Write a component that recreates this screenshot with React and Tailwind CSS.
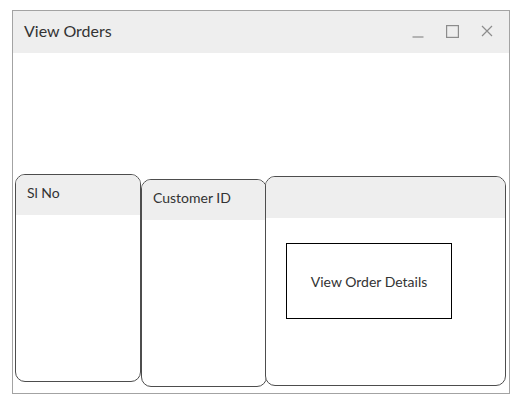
export default function App() {
  return (
    <div className="w-[516px] h-[402px] bg-white pt-[10px] pl-[12px]" style={{ fontFamily: 'Lato, "Noto Sans", sans-serif' }}>
      <div className="w-[498px] h-[384px] border border-[#a3a3a3] flex flex-col">
        <div className="h-[42px] bg-[#eeeeee] flex items-center justify-between pl-[11px] pr-[16px] pb-[2px]">
          <span className="text-[16px] text-[#333333]">View Orders</span>
          <div className="flex items-center gap-[22px] text-[#8c8c8c]">
            <svg width="12" height="14" viewBox="0 0 12 14">
              <path d="M0.5 13H11.5" stroke="currentColor" strokeWidth="1.2" />
            </svg>
            <svg width="13" height="13" viewBox="0 0 13 13">
              <rect x="0.6" y="0.6" width="11.8" height="11.8" fill="none" stroke="currentColor" strokeWidth="1.2" />
            </svg>
            <svg width="12" height="12" viewBox="0 0 12 12">
              <path d="M1 1L11 11M11 1L1 11" stroke="currentColor" strokeWidth="1.2" />
            </svg>
          </div>
        </div>
        <div className="flex items-start pl-[2px]">
          <div className="mt-[121px] w-[126px] h-[208px] border-[1.5px] border-[#4d4d4d] rounded-[10px] overflow-hidden bg-white">
            <div className="h-[40px] bg-[#eeeeee] pl-[11px] pt-[7px] text-[14px] text-[#333333]">Sl No</div>
          </div>
          <div className="mt-[126px] w-[126px] h-[208px] border-[1.5px] border-[#4d4d4d] rounded-[10px] overflow-hidden bg-white">
            <div className="h-[40px] bg-[#eeeeee] pl-[11px] pt-[7px] text-[14px] text-[#333333]">Customer ID</div>
          </div>
          <div className="mt-[123px] -ml-[2px] w-[241px] h-[210px] border-[1.5px] border-[#4d4d4d] rounded-[10px] overflow-hidden bg-white">
            <div className="h-[41px] bg-[#eeeeee]"></div>
            <div className="ml-[20px] mt-[25px] w-[166px] h-[76px] border border-black flex items-center justify-center text-[14px] text-[#333333]">
              View Order Details
            </div>
          </div>
        </div>
      </div>
    </div>
  );
}
